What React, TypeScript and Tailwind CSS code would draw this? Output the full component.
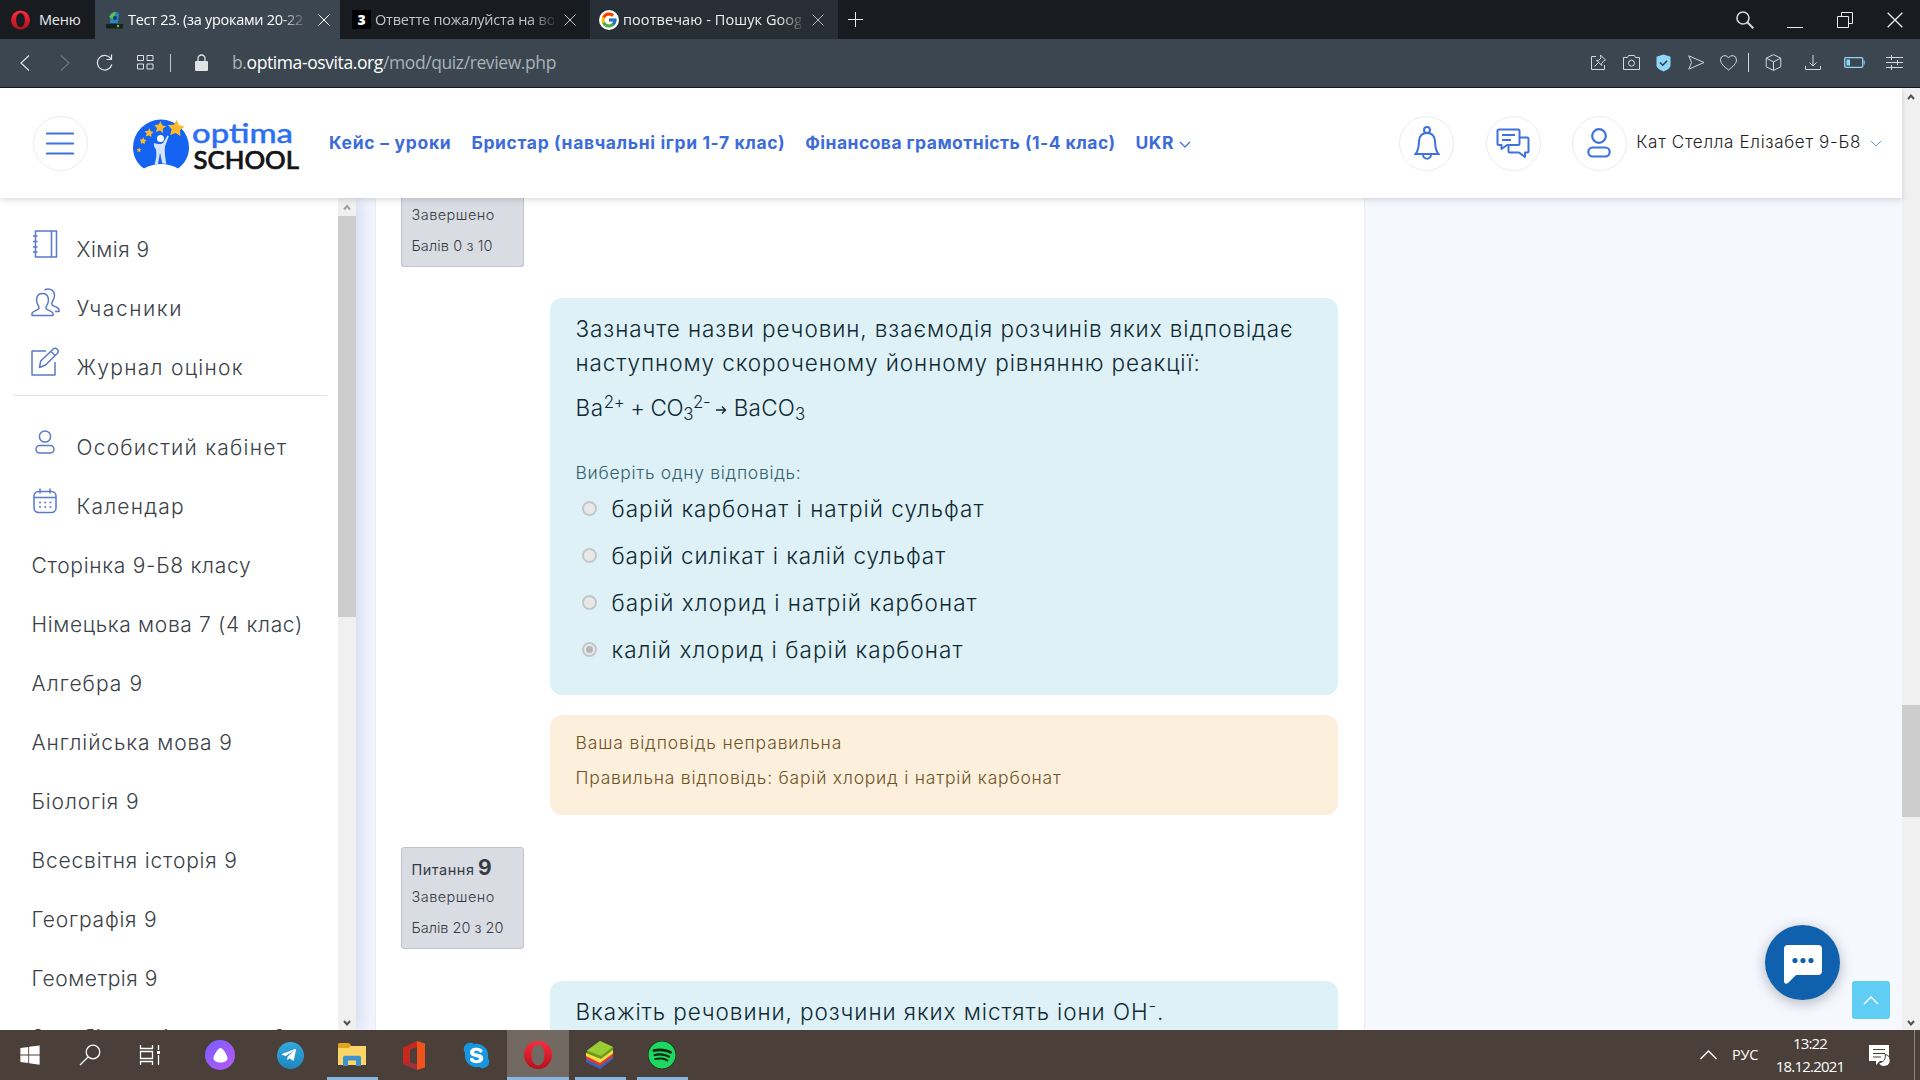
import type { ReactNode } from 'react'
import { FcGoogle } from 'react-icons/fc'
import { FaSkype, FaSpotify, FaTelegramPlane, FaWindows } from 'react-icons/fa'

type Option = { text: string; spacing: string; checked?: boolean }

const NAV = [
  { label: 'Кейс – уроки', spacing: 'tracking-[0.71px]' },
  { label: 'Бристар (навчальні ігри 1-7 клас)', spacing: 'tracking-[0.63px]' },
  { label: 'Фінансова грамотність (1-4 клас)', spacing: 'tracking-[0.46px]' },
]

const COURSES = [
  { label: 'Сторінка 9-Б8 класу', spacing: 'tracking-[0.7px]' },
  { label: 'Німецька мова 7 (4 клас)', spacing: 'tracking-[0.66px]' },
  { label: 'Алгебра 9', spacing: 'tracking-[1.05px]' },
  { label: 'Англійська мова 9', spacing: 'tracking-[0.88px]' },
  { label: 'Біологія 9', spacing: 'tracking-[0.87px]' },
  { label: 'Всесвітня історія 9', spacing: 'tracking-[0.82px]' },
  { label: 'Географія 9', spacing: 'tracking-[0.78px]' },
  { label: 'Геометрія 9', spacing: 'tracking-[0.55px]' },
  { label: 'Зарубіжна література 9', spacing: 'tracking-[0.78px]' },
]

const OPTIONS: Option[] = [
  { text: 'барій карбонат і натрій сульфат', spacing: 'tracking-[1.02px]' },
  { text: 'барій силікат і калій сульфат', spacing: 'tracking-[0.95px]' },
  { text: 'барій хлорид і натрій карбонат', spacing: 'tracking-[1.08px]' },
  { text: 'калій хлорид і барій карбонат', spacing: 'tracking-[1.06px]', checked: true },
]

function Svg({ w, h, children, className = '' }: { w: number; h: number; children: ReactNode; className?: string }) {
  return (
    <svg
      width={w}
      height={h}
      viewBox={`0 0 ${w} ${h}`}
      fill="none"
      stroke="currentColor"
      className={`shrink-0 ${className}`}
    >
      {children}
    </svg>
  )
}

function CloseIcon({ size = 12 }: { size?: number }) {
  return (
    <svg width={size} height={size} viewBox="0 0 12 12" stroke="currentColor" strokeWidth="1" className="shrink-0">
      <path d="M.5.5l11 11M11.5.5l-11 11" />
    </svg>
  )
}

function OperaIcon({ w, h }: { w: number; h: number }) {
  return (
    <svg width={w} height={h} viewBox="0 0 28 28" className="shrink-0">
      <defs>
        <linearGradient id="opera" x1="0" y1="0" x2="0" y2="1">
          <stop offset="0" stopColor="#ff2b3c" />
          <stop offset="1" stopColor="#b3101c" />
        </linearGradient>
      </defs>
      <path
        fill="url(#opera)"
        fillRule="evenodd"
        d="M14 0a14 14 0 1 0 0 28 14 14 0 0 0 0-28zm0 3.600c3.900 0 6.400 4.300 6.400 10.400S17.900 24.400 14 24.400 7.600 20.100 7.600 14 10.100 3.600 14 3.600z"
      />
    </svg>
  )
}

function TitleBar() {
  return (
    <div className="flex h-[39px] shrink-0 bg-[#181c20] text-[14.5px] text-[#e9ecef]">
      <div className="flex w-[95px] items-center gap-[9px] pl-[11px]">
        <OperaIcon w={19} h={20} />
        <span className="tracking-[-0.2px]">Меню</span>
      </div>
      <div className="flex w-[245px] items-center bg-[#3b4651] pl-[11px] text-white">
        <svg width="17" height="18" viewBox="0 0 17 18" className="mr-[5px] shrink-0">
          <rect y="13" width="17" height="4.500" rx="1" fill="#16221c" />
          <path d="M4 12V5a5 5 0 0 1 9-2l-1 9z" fill="#2187c9" />
          <path d="M3 6c2-3 4-5 7-5L7 8z" fill="#6fbf3a" />
          <circle cx="9" cy="7" r="2" fill="#123d5e" />
          <circle cx="12" cy="15" r="1.200" fill="#7fd63b" />
        </svg>
        <span className="w-[180px] overflow-hidden whitespace-nowrap tracking-[-0.3px] [mask-image:linear-gradient(to_right,#000_84%,transparent)]">
          Тест 23. (за уроками 20-22
        </span>
        <span className="ml-[10px]">
          <CloseIcon />
        </span>
      </div>
      <div className="flex w-[250px] items-center pl-[12px] text-[#c3c7cb]">
        <span className="mr-[4px] flex h-[19px] w-[19px] shrink-0 items-center justify-center bg-black text-[14px] font-extrabold text-white">
          3
        </span>
        <span className="w-[179px] overflow-hidden whitespace-nowrap tracking-[-0.2px] [mask-image:linear-gradient(to_right,#000_86%,transparent_103%)]">
          Ответте пожалуйста на во
        </span>
        <span className="ml-[10px]">
          <CloseIcon />
        </span>
      </div>
      <div className="flex w-[248px] items-center bg-[#272e36] pl-[9px] text-[#eceff1]">
        <span className="mr-[4px] flex h-5 w-5 shrink-0 items-center justify-center rounded-full bg-white">
          <FcGoogle size={18} />
        </span>
        <span className="w-[178px] overflow-hidden whitespace-nowrap tracking-[0.08px] [mask-image:linear-gradient(to_right,#000_88%,transparent_103%)]">
          поотвечаю - Пошук Goog
        </span>
        <span className="ml-[11px] text-[#b4b8bc]">
          <CloseIcon />
        </span>
      </div>
      <div className="flex items-center pl-[10px]">
        <Svg w={15} h={15}>
          <path d="M7.500 0v15M0 7.500h15" />
        </Svg>
      </div>
      <div className="ml-auto flex items-center pr-[17px]">
        <Svg w={18} h={18} className="mr-[33px] text-[#d5d8db]">
          <circle cx="7" cy="7" r="6" strokeWidth="1.600" />
          <path d="M11.300 11.300l6 6" strokeWidth="2" />
        </Svg>
        <Svg w={16} h={18} className="mr-[34px]">
          <path d="M0 16.500h16" />
        </Svg>
        <Svg w={16} h={16} className="mr-[34px]">
          <path d="M.5 4.500h11v11H.5zM4.500 4.500v-4h11v11h-4" />
        </Svg>
        <CloseIcon size={16} />
      </div>
    </div>
  )
}

function AddressBar() {
  return (
    <div className="flex h-[49px] shrink-0 items-center border-b border-[#15191e] bg-[#3b4651] pb-px text-[#dfe3e6]">
      <Svg w={10} h={16} className="ml-[20px]">
        <path d="M9 .5L1 8l8 7.500" strokeWidth="1.200" />
      </Svg>
      <Svg w={10} h={16} className="ml-[30px] text-[#6d7780]">
        <path d="M1 .5L9 8l-8 7.500" strokeWidth="1.200" />
      </Svg>
      <Svg w={17} h={17} className="ml-[26px]">
        <path d="M15 5a7.300 7.300 0 1 0 .8 5.500M15.500.5v5h-5" strokeWidth="1.200" />
      </Svg>
      <Svg w={17} h={15} className="ml-[24px]">
        <path d="M.5.5h6v5h-6zM10 .5h6v5h-6zM.5 9h6v5h-6zM10 9h6v5h-6z" />
      </Svg>
      <span className="ml-[16px] h-[18px] w-px bg-[#c5cacf]" />
      <Svg w={13} h={17} className="ml-[24px]">
        <rect y="7" width="13" height="10" rx="1" fill="currentColor" stroke="none" />
        <path d="M3 8V4.500a3.500 3.500 0 0 1 7 0V8" strokeWidth="1.300" />
      </Svg>
      <span className="ml-[24px] text-[17.500px] tracking-[-0.4px] text-[#aab2ba]">
        b.<span className="text-white">optima-osvita.org</span>/mod/quiz/review.php
      </span>

      <div className="ml-auto flex items-center pr-[17px] text-[#d3d8dc]">
        <Svg w={17} h={17} className="mr-[16px]">
          <path d="M6 2.500H1.500v13h13V11M10.500 1l5 5-1.500.5-2.500 3 .3 2-5.300-5.300 2 .3 2.500-2.500zM8.500 8.500l-4 4" />
        </Svg>
        <Svg w={17} h={15} className="mr-[16px]">
          <path d="M.5 2.500h4l1-2h6l1 2h4v12H.5z" />
          <circle cx="8.500" cy="8.200" r="3" />
        </Svg>
        <svg width="15" height="18" viewBox="0 0 15 18" fill="none" className="mr-[17px]">
          <path d="M7.500.5l7 2.300v8.500c0 2.500-3 4.700-7 6.200-4-1.500-7-3.700-7-6.200V2.800z" fill="#8fd8fb" />
          <path d="M4 8.500l2.700 2.700 4.500-4.500" stroke="#2f3b46" strokeWidth="1.600" />
        </svg>
        <Svg w={17} h={15} className="mr-[15px]">
          <path d="M.8.8L16 7.500.8 14.200l2.700-6.700z" />
        </Svg>
        <Svg w={17} h={16} className="mr-[11px]">
          <path d="M8.500 15C4 11.500.5 8.500.5 4.800a4.200 4.200 0 0 1 8-1.800 4.200 4.200 0 0 1 8 1.800c0 3.700-3.500 6.700-8 10.200z" />
        </Svg>
        <span className="h-[19px] w-px bg-[#d3d8dc]" />
        <Svg w={17} h={17} className="ml-[16px]">
          <path d="M8.500.6l7.300 3.600v8.600l-7.300 3.600-7.300-3.600V4.200zM1.200 4.200l7.300 3.600 7.300-3.600M8.500 7.800v8.600" />
        </Svg>
        <Svg w={16} h={16} className="ml-[23px]">
          <path d="M.5 11v3.500h15V11M8 0v11M4.500 7.500L8 11l3.500-3.500" />
        </Svg>
        <Svg w={21} h={11} className="ml-[23px] text-[#8fd8fb]">
          <rect x=".7" y=".7" width="18" height="9.600" rx="1" strokeWidth="1.300" />
          <path d="M2.500 2.500h3.500v6H2.500z" fill="currentColor" stroke="none" />
          <path d="M20.200 3.500v4" />
        </Svg>
        <Svg w={17} h={15} className="ml-[21px]">
          <path d="M0 2.500h17M0 7.500h17M0 12.500h17M5.500 0v5M11.500 5v5M5.500 10v5" />
        </Svg>
      </div>
    </div>
  )
}

// five-pointed star path around (x, y)
function star(x: number, y: number, r: number) {
  const pts: string[] = []
  for (let i = 0; i < 10; i++) {
    const a = -Math.PI / 2 + (i * Math.PI) / 5 + 0.1
    const d = i % 2 ? r * 0.5 : r
    pts.push(`${(x + d * Math.cos(a)).toFixed(1)},${(y + d * Math.sin(a)).toFixed(1)}`)
  }
  return pts.join(' ')
}

function Logo() {
  return (
    <svg width="190" height="75" viewBox="0 0 190 75" className="shrink-0">
      <path d="M24 62.500C17 58 13 50 13 41.500a28 28 0 0 1 56 0c0 8.500-4 16-11 21-10-6-24-6-34 0z" fill="#1463f3" />
      <circle cx="40.500" cy="32.500" r="3.500" fill="#fff" />
      <path
        d="M34 37c3 1.300 7 1.300 9 0l4.500-7.500 1.300.7-3.800 10c-.7 5 .3 12 1.300 17.500l-4-.3-2.300-11-2 11.500-3.500.5c2-6 2.300-10 1.500-15-1.500-1.500-2.500-4-2-6.400z"
        fill="#d5e3ff"
      />
      <g fill="#fdb92a">
        <polygon points={star(19, 44, 2.6)} />
        <polygon points={star(23, 35, 3.8)} />
        <polygon points={star(29, 27, 4.8)} />
        <polygon points={star(40, 21.5, 6.2)} />
        <polygon points={star(56, 22.5, 8.8)} />
      </g>
      <text x="72" y="37" textLength="101" lengthAdjust="spacingAndGlyphs" fontSize="27" className="font-['Lato'] font-medium" fill="#2c6ff2" stroke="#2c6ff2" strokeWidth=".4">
        optima
      </text>
      <text x="73.500" y="62.500" textLength="105.500" lengthAdjust="spacingAndGlyphs" fontSize="25.500" className="font-['Lato'] font-medium" fill="#141414" stroke="#141414" strokeWidth=".7">
        SCHOOL
      </text>
    </svg>
  )
}

function RoundButton({ children, className = '' }: { children: ReactNode; className?: string }) {
  return (
    <div
      className={`flex h-[55px] w-[55px] shrink-0 items-center justify-center rounded-full border border-[#ececf2] text-[#3f72de] ${className}`}
    >
      {children}
    </div>
  )
}

function Header() {
  return (
    <header className="relative z-10 flex h-[110px] shrink-0 items-center bg-white pl-[33px] pr-[20px] font-['Inter'] shadow-[0_2px_6px_rgba(0,0,0,0.14)]">
      <RoundButton>
        <Svg w={28} h={23} className="-ml-px">
          <path d="M1 1.500h26M1 11.500h26M1 21.500h26" strokeWidth="2.200" strokeLinecap="round" />
        </Svg>
      </RoundButton>
      <div className="ml-[32px]">
        <Logo />
      </div>
      <nav className="ml-[19px] flex items-center gap-[20px] whitespace-nowrap text-[17.5px] font-bold text-[#3d6cda]">
        {NAV.map((n) => (
          <a key={n.label} className={n.spacing}>
            {n.label}
          </a>
        ))}
        <a className="flex items-center gap-[5px] tracking-[0.55px]">
          UKR
          <Svg w={12} h={7} className="mt-[3px]">
            <path d="M1 1l5 5 5-5" strokeWidth="1.200" />
          </Svg>
        </a>
      </nav>
      <div className="ml-auto flex items-center">
        <RoundButton>
          <Svg w={26} h={34}>
            <g strokeWidth="2">
              <circle cx="13" cy="4" r="3" />
              <path d="M1.500 28h23c-3.500-4-3-7-3.500-13-.4-5-3.500-8-8-8s-7.600 3-8 8c-.5 6 0 9-3.500 13zM9 28.500c0 5.500 8 5.500 8 0" />
            </g>
          </Svg>
        </RoundButton>
        <RoundButton className="ml-[31.5px]">
          <Svg w={34} h={30}>
            <g strokeWidth="2" strokeLinejoin="round">
              <path d="M3 1.500h19c1 0 1.500.5 1.500 1.500v12.500c0 1-.5 1.500-1.500 1.500H11l-5.500 4V17H3c-1 0-1.500-.5-1.500-1.500V3c0-1 .5-1.500 1.500-1.500z" />
              <path d="M24 9.500h7c1 0 1.500.5 1.500 1.500v12c0 1-.5 1.500-1.500 1.500h-2V29l-6-4.500H14c-1 0-1.500-.5-1.500-1.500v-5.500M6 7h13M6 12h9" />
            </g>
          </Svg>
        </RoundButton>
        <RoundButton className="ml-[31px]">
          <Svg w={24} h={30}>
            <circle cx="12" cy="8" r="6.800" strokeWidth="2.200" />
            <rect x="1.300" y="19.500" width="21.400" height="9" rx="4.500" strokeWidth="2.200" />
          </Svg>
        </RoundButton>
        <span className="ml-[9.5px] whitespace-nowrap text-[17px] font-light tracking-[0.68px] text-[#222]">
          Кат Стелла Елізабет 9-Б8
        </span>
        <Svg w={12} h={7} className="ml-[9px] text-[#6f9fd0]">
          <path d="M1 1l5 5 5-5" />
        </Svg>
      </div>
    </header>
  )
}

function SideLink({ label, spacing, icon }: { label: string; spacing: string; icon?: ReactNode }) {
  return (
    <a className="flex h-[59px] shrink-0 items-center whitespace-nowrap pl-[31.5px] text-[21px] font-light text-[#3b4148]">
      {icon && <span className="-ml-[0.5px] flex w-[45.5px] pb-[12px] text-[#5a79c9]">{icon}</span>}
      <span className={spacing}>{label}</span>
    </a>
  )
}

function Sidebar() {
  return (
    <aside className="z-[1] flex w-[356px] shrink-0 bg-white shadow-[4px_0_16px_rgba(70,90,160,0.2)]">
      <div className="flex w-[338px] flex-col overflow-hidden pt-[22px]">
        <SideLink
          label="Хімія 9"
          spacing="tracking-[0.5px]"
          icon={
            <Svg w={27} h={28} className="ml-px">
              <path
                d="M3.500 1h21v26h-21zM19.500 1v26M1 6h4.500M1 11.500h4.500M1 17h4.500M1 22h4.500"
                strokeWidth="1.500"
              />
            </Svg>
          }
        />
        <SideLink
          label="Учасники"
          spacing="tracking-[1.52px]"
          icon={
            <Svg w={29} h={29}>
              <path
                d="M1 27.500v-2c0-2 5-3 6.500-4.500.6-.7.500-2 0-3C4.500 14 4.500 5.500 11.500 5.500S18.500 14 15.500 18c-.5 1-.6 2.300 0 3 1.500 1.500 6.500 2.500 6.500 4.500v2zM13.500 2c6-3 11.500 1.500 9.500 8-.4 1.500-1.500 3-2 4.500-.3 1-.2 2 .5 2.700 1.500 1.500 6.500 2 6.500 4.300v2h-4"
                strokeWidth="1.500"
                strokeLinejoin="round"
              />
            </Svg>
          }
        />
        <SideLink
          label="Журнал оцінок"
          spacing="tracking-[1.28px]"
          icon={
            <Svg w={29} h={29}>
              <path
                d="M15 4H1v24h23V15M8.500 20.500l1.200-6.500L22 2.200c2.800-2.500 7 1.200 4.300 4.300L14.500 18zM20 4.500l4 4"
                strokeWidth="1.500"
                strokeLinejoin="round"
              />
            </Svg>
          }
        />
        <div className="-mt-[2px] mb-[22px] ml-[13px] mr-[11px] h-px shrink-0 bg-[#e2e3e6]" />
        <SideLink
          label="Особистий кабінет"
          spacing="tracking-[1.23px]"
          icon={
            <Svg w={20} h={24} className="ml-[4px]">
              <circle cx="10" cy="6.500" r="5.600" strokeWidth="1.500" />
              <rect x="1" y="15.500" width="18" height="7.500" rx="3.700" strokeWidth="1.500" />
            </Svg>
          }
        />
        <SideLink
          label="Календар"
          spacing="tracking-[1.2px]"
          icon={
            <Svg w={24} h={26} className="ml-[2px]">
              <rect x="1" y="3.500" width="22" height="21" rx="4.500" strokeWidth="1.500" />
              <path d="M1 9.500h22M7 .5v5M17 .5v5" strokeWidth="1.500" />
              <path d="M6 14.500h12.500M6 19h12.500" strokeWidth="1.600" strokeDasharray="2 3.200" />
            </Svg>
          }
        />
        {COURSES.map((c) => (
          <SideLink key={c.label} label={c.label} spacing={c.spacing} />
        ))}
      </div>
      <div className="flex w-[18px] flex-col items-center bg-[#f0f0f0]">
        <Svg w={18} h={18} className="text-[#a3a3a3]">
          <path d="M6 11.500l3-3.500 3 3.500" strokeWidth="2" />
        </Svg>
        <div className="h-[401px] w-full bg-[#cdcdcd]" />
        <Svg w={18} h={16} className="mt-auto text-[#505050]">
          <path d="M6 7l3 3.500L12 7" strokeWidth="2" />
        </Svg>
      </div>
    </aside>
  )
}

function Radio({ checked }: { checked?: boolean }) {
  return (
    <span className="flex h-[15px] w-[15px] shrink-0 items-center justify-center rounded-full border-2 border-[#c2c6c8] bg-[#e9e8e8]">
      {checked && <span className="h-[7px] w-[7px] rounded-full bg-[#b3b5b7]" />}
    </span>
  )
}

function Quiz() {
  return (
    <section className="-ml-px flex w-[990px] shrink-0 flex-col overflow-hidden border-x border-[#e9edf5] bg-white pl-[25px]">
      <div className="h-[69px] w-[123px] shrink-0 rounded-b-[3px] border border-t-0 border-[#c1c3ce] bg-[#dadce4] pl-[9.5px] pt-px text-[14.5px] font-light leading-[31px] text-[#343b42]">
        <p className="tracking-[0.45px]">Завершено</p>
        <p className="tracking-[0.1px]">Балів 0 з 10</p>
      </div>

      <div className="ml-[149px] mt-[31px] h-[397px] w-[788px] shrink-0 rounded-[12px] bg-[#def1f7] px-[25.5px] pt-[14px] text-[22.5px] font-light leading-[34px] text-[#0f2a33]">
        <p className="whitespace-nowrap tracking-[0.92px]">
          Зазначте назви речовин, взаємодія розчинів яких відповідає
        </p>
        <p className="tracking-[0.92px]">наступному скороченому йонному рівнянню реакції:</p>
        <p className="mt-[11px] flex h-[34px] whitespace-pre tracking-[0.2px]">
          <span className="tracking-[-0.38px]">
            <span className="tracking-[0.6px]">Ba</span>
            <sup>2+</sup> + CO<sub>3</sub>
            <sup>2-</sup>{' '}
          </span>
          <Svg w={11} h={34}>
            <path d="M0 19h9M6 15.500l3.500 3.500L6 22.500" strokeWidth="1.400" />
          </Svg>
          <span>
            {' '}BaCO<sub>3</sub>
          </span>
        </p>
        <p className="mt-[35px] text-[17.5px] leading-[26px] tracking-[0.7px] text-[#33606f]">
          Виберіть одну відповідь:
        </p>
        <div className="-mt-px">
          {OPTIONS.map((o) => (
            <label key={o.text} className="flex h-[47px] items-center pl-[6px]">
              <span className="pb-[1px]">
                <Radio checked={o.checked} />
              </span>
              <span className={`ml-[15px] ${o.spacing}`}>{o.text}</span>
            </label>
          ))}
        </div>
      </div>

      <div className="ml-[149px] mt-[20px] h-[100px] w-[788px] shrink-0 rounded-[12px] bg-[#fcefdc] px-[25.5px] pt-[10px] text-[17.5px] font-light leading-[35px] text-[#6d5327]">
        <p className="tracking-[0.87px]">Ваша відповідь неправильна</p>
        <p className="tracking-[0.78px]">Правильна відповідь: барій хлорид і натрій карбонат</p>
      </div>

      <div className="mt-[32px] h-[102px] w-[123px] shrink-0 rounded-[3px] border border-[#c1c3ce] bg-[#dadce4] pl-[9.5px] pt-[6px] text-[14.5px] font-light leading-[31px] text-[#343b42]">
        <p className="h-[27px] font-normal leading-[27px] tracking-[0.5px]">
          Питання <span className="-ml-px text-[21px] font-bold">9</span>
        </p>
        <p className="tracking-[0.45px]">Завершено</p>
        <p>Балів 20 з 20</p>
      </div>

      <div className="ml-[149px] mt-[32px] h-[120px] w-[788px] shrink-0 rounded-[12px] bg-[#def1f7] px-[25.5px] pt-[14px] text-[22.5px] font-light leading-[34px] text-[#0f2a33]">
        <p className="tracking-[0.92px]">
          Вкажіть речовини, розчини яких містять іони ОН<sup>-</sup>.
        </p>
      </div>
    </section>
  )
}

function FloatingButtons() {
  return (
    <div className="absolute bottom-[11px] right-[12px] flex items-end">
      <div className="mb-[19px] mr-[12px] flex h-[75px] w-[75px] items-center justify-center rounded-full bg-[#0f61ae] shadow-[0_3px_14px_rgba(0,0,0,0.28)]">
        <svg width="38" height="39" viewBox="0 0 38 39" className="mt-[4px]">
          <path d="M4 0h30a4 4 0 0 1 4 4v22a4 4 0 0 1-4 4H12l-8 8c-2 1.500-4 .5-4-2V4a4 4 0 0 1 4-4z" fill="#fff" />
          <g fill="#0f61ae">
            <circle cx="11" cy="15.500" r="2.600" />
            <circle cx="19" cy="15.500" r="2.600" />
            <circle cx="27" cy="15.500" r="2.600" />
          </g>
        </svg>
      </div>
      <div className="flex h-[38px] w-[38px] items-center justify-center rounded-[3px] bg-[#5fcdf4] text-white">
        <Svg w={16} h={9}>
          <path d="M1 8l7-7 7 7" strokeWidth="1.400" />
        </Svg>
      </div>
    </div>
  )
}

function TaskItem({ children, active, running }: { children: ReactNode; active?: boolean; running?: boolean }) {
  return (
    <div className={`flex h-full w-[62px] flex-col items-center ${active ? 'bg-[#736963]' : ''}`}>
      <div className="flex h-[47px] items-center pt-[3px]">{children}</div>
      {running && <div className={`h-[3px] bg-[#86b7e2] ${active ? 'w-full' : 'w-[51px]'}`} />}
    </div>
  )
}

function Taskbar() {
  return (
    <footer className="flex h-[50px] shrink-0 bg-[#4a3f39] text-white">
      <div className="flex w-[60px] items-center justify-center">
        <FaWindows size={22} />
      </div>
      <div className="flex w-[60px] items-center justify-center">
        <Svg w={22} h={22}>
          <circle cx="14" cy="8" r="6.800" strokeWidth="1.300" />
          <path d="M9 13l-8 8" strokeWidth="1.300" />
        </Svg>
      </div>
      <div className="flex w-[60px] items-center justify-center">
        <Svg w={22} h={20}>
          <path d="M1.500 0v3.500h12V0M1.500 20v-3.500h12V20M1.500 6.500h12v7h-12zM19.500 0v5M19.500 10v10" strokeWidth="1.300" />
          <path d="M18 6h3v3h-3z" fill="currentColor" stroke="none" />
        </Svg>
      </div>
      <div className="flex w-[80px] items-center justify-center">
        <span className="flex h-[30px] w-[30px] items-center justify-center rounded-full bg-linear-to-br from-[#7a5cff] to-[#b558f5]">
          <svg width="15" height="15" viewBox="0 0 15 15">
            <path d="M7.500 0c2.500 0 7 7.500 7 10.300S11.500 14.500 7.500 14.500.5 13 .5 10.300 5 0 7.500 0z" fill="#fff" />
          </svg>
        </span>
      </div>
      <div className="mr-px flex w-[60px] items-center justify-center">
        <span className="flex h-[27px] w-[27px] items-center justify-center rounded-full bg-linear-to-b from-[#35a9de] to-[#1c87bd]">
          <FaTelegramPlane size={16} className="-ml-[2px]" />
        </span>
      </div>
      <TaskItem running>
        <svg width="28" height="24" viewBox="0 0 28 24">
          <path d="M0 1.500C0 .7.500 0 1.500 0H11l2.500 3H28v8H0z" fill="#e0a31c" />
          <path d="M0 5h11l2-2h15v19H0z" fill="#fbd667" />
          <path d="M5 23V14.500c0-1 .7-1.700 1.700-1.700h14.600c1 0 1.700.7 1.700 1.700V23h-5v-5.500h-8V23z" fill="#3c93d0" />
        </svg>
      </TaskItem>
      <TaskItem>
        <svg width="24" height="29" viewBox="0 0 24 29">
          <path d="M1 6.500L15 0v6l-7 2.500V21l-7 2.500z" fill="#c6271f" />
          <path d="M15 0l8 2.500v24L15 29z" fill="#f0541c" />
          <path d="M1 23.500L8 21l7 2.800V29z" fill="#a3303c" />
        </svg>
      </TaskItem>
      <TaskItem>
        <FaSkype size={29} className="rounded-[12px] bg-[radial-gradient(circle,#fff_50%,transparent_55%)] text-[#1697e0]" />
      </TaskItem>
      <TaskItem active running>
        <OperaIcon w={28} h={28} />
      </TaskItem>
      <TaskItem running>
        <svg width="28" height="28" viewBox="0 0 28 28">
          <path d="M0 17l12-8 15 5v4L14 28 0 21z" fill="#3a62c0" />
          <path d="M0 15l12-8 15 5v3.500L14 25 0 18z" fill="#e2382f" />
          <path d="M0 12l12-8 15 5v3.500L14 22 0 15z" fill="#f7dc45" />
          <path d="M1 9.500L14 0l13 6v3L15 18 1 12.500z" fill="#6a9c1c" />
          <path d="M1 9.500L14 0l13 6-12 9z" fill="#9ccb36" />
        </svg>
      </TaskItem>
      <TaskItem running>
        <FaSpotify size={28} className="rounded-full bg-[#10240f] text-[#1ed760]" />
      </TaskItem>

      <div className="ml-auto flex items-center text-[15px]">
        <Svg w={17} h={10}>
          <path d="M.5 9l8-8 8 8" strokeWidth="1.300" />
        </Svg>
        <span className="ml-[15px] text-[14.5px] tracking-[-0.3px]">РУС</span>
        <div className="ml-[12px] flex w-[80px] flex-col items-center leading-[23px] tracking-[-0.8px]">
          <span>13:22</span>
          <span>18.12.2021</span>
        </div>
        <Svg w={21} h={21} className="ml-[19px]">
          <path d="M0 0h20v16H11l-4 4v-4H0z" fill="#fff" stroke="none" />
          <path d="M4 4.500h12M4 8.500h12M4 12h8" stroke="#4a3f39" />
          <path d="M16 9.500a6 6 0 0 1-6.500 8 6 6 0 1 0 6.500-8z" fill="#fff" stroke="#4a3f39" />
        </Svg>
        <span className="ml-[24px] mr-[5px] h-[50px] w-px bg-[#8d8581]" />
      </div>
    </footer>
  )
}

export default function App() {
  return (
    <div className="flex h-[1080px] w-[1920px] flex-col overflow-hidden font-['Open_Sans',sans-serif]">
      <TitleBar />
      <AddressBar />
      <div className="flex min-h-0 flex-1">
        <div className="flex w-[1902px] flex-col">
          <Header />
          <main className="relative flex min-h-0 flex-1 overflow-hidden bg-[#f5f8ff] font-['Inter',sans-serif]">
            <Sidebar />
            <div className="w-[20px] shrink-0 bg-[#f3f6fe]" />
            <Quiz />
            <FloatingButtons />
          </main>
        </div>
        <div className="flex flex-1 flex-col items-center bg-[#f0f0f0] text-[#505050]">
          <Svg w={18} h={18}>
            <path d="M6 11l3-3.500 3 3.500" strokeWidth="2" />
          </Svg>
          <div className="mt-[599px] h-[112px] w-full bg-[#cdcdcd]" />
          <Svg w={18} h={16} className="mt-auto">
            <path d="M6 7l3 3.500L12 7" strokeWidth="2" />
          </Svg>
        </div>
      </div>
      <Taskbar />
    </div>
  )
}
